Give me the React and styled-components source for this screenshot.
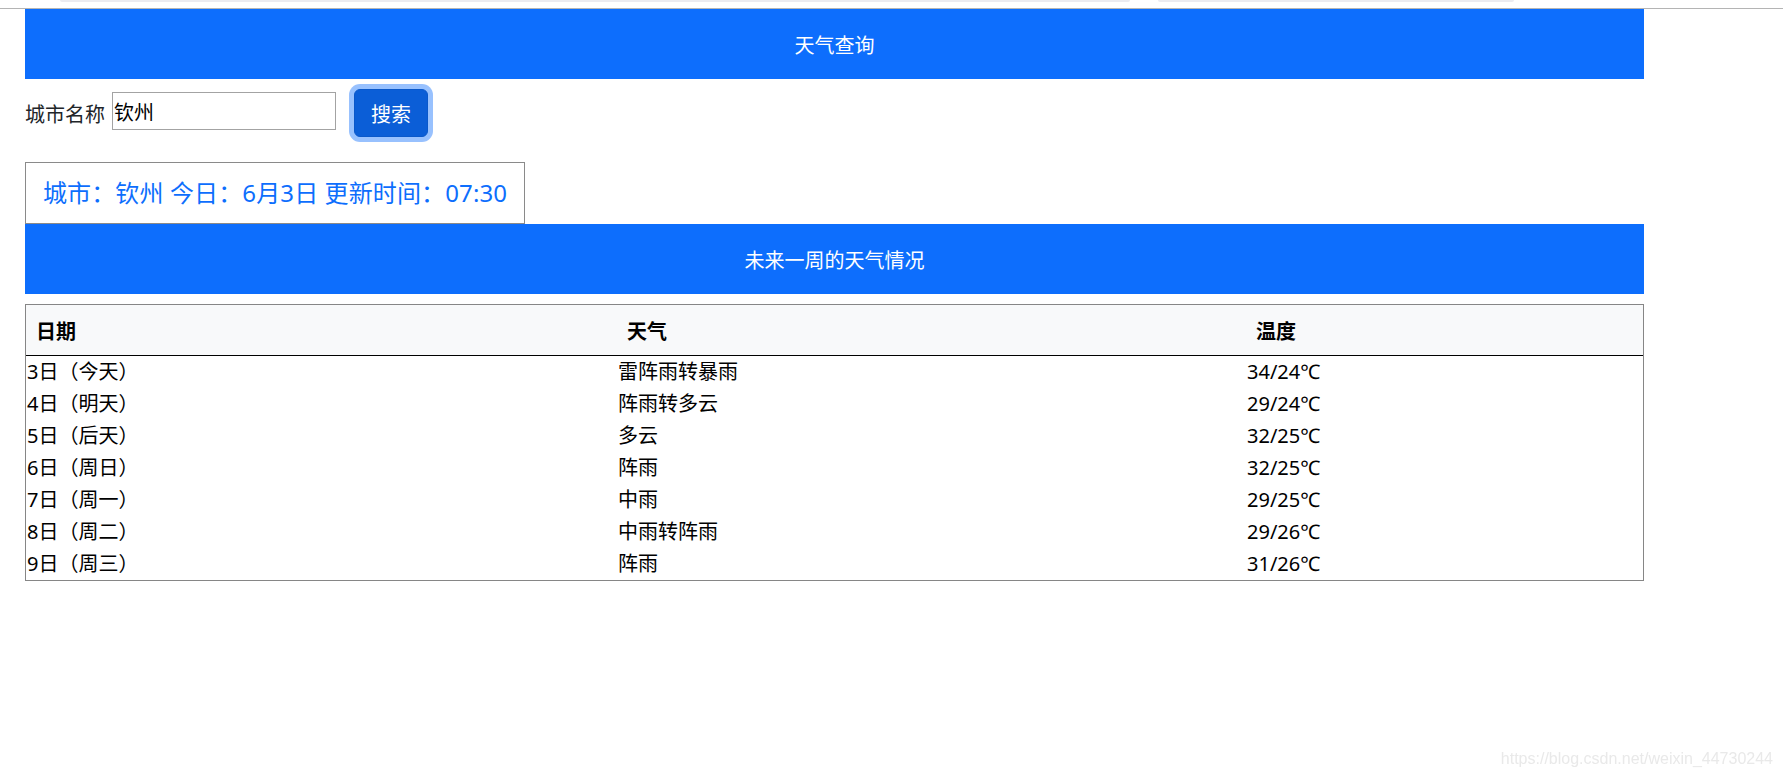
import React from 'react';
import styled, { createGlobalStyle } from 'styled-components';

const GlobalStyle = createGlobalStyle`
  html, body {
    margin: 0;
    padding: 0;
    background: #ffffff;
  }
  body {
    font-family: "Noto Sans", "Noto Sans CJK SC", sans-serif;
    color: #212529;
    min-height: 778px;
  }
`;

const TopStrip = styled.div`
  height: 8px;
  border-bottom: 1px solid #b4b4b4;
  display: flex;
  align-items: flex-start;
  gap: 28px;
  padding-left: 60px;
`;

const ChromeTab = styled.div`
  width: ${(p) => p.$w}px;
  height: 2px;
  background: #ebebf0;
  border-radius: 0 0 6px 6px;
`;

const Main = styled.main`
  margin-left: 25px;
  width: 1619px;
`;

const Banner = styled.div`
  height: 70px;
  background: #0d6efd;
  color: #ffffff;
  font-size: 20px;
  display: flex;
  align-items: center;
  justify-content: center;
`;

const SearchRow = styled.form`
  margin-top: 10px;
  height: 48px;
  display: flex;
  align-items: center;
`;

const Label = styled.label`
  font-size: 20px;
  color: #212529;
  margin-right: 7px;
`;

const CityInput = styled.input`
  box-sizing: border-box;
  width: 224px;
  height: 38px;
  margin: 0 18px 4px 0;
  padding: 0 1px;
  border: 1px solid #a3a3a3;
  font-family: "Noto Sans", "Noto Sans CJK SC", sans-serif;
  font-size: 20px;
  color: #000;
  outline: none;
`;

const SearchButton = styled.button`
  box-sizing: border-box;
  width: 74px;
  height: 48px;
  border: 1px solid #0a58ca;
  border-radius: 6px;
  background: #0b5ed7;
  color: #ffffff;
  font-family: "Noto Sans", "Noto Sans CJK SC", sans-serif;
  font-size: 20px;
  padding: 0;
  box-shadow: 0 0 0 5px rgba(49, 132, 253, 0.5);
  cursor: pointer;
`;

const InfoBox = styled.div`
  margin-top: 25px;
  width: fit-content;
  box-sizing: border-box;
  height: 62px;
  border: 1px solid #8a8a8a;
  padding: 0 17px;
  font-size: 24px;
  letter-spacing: 0.12px;
  line-height: 60px;
  color: #0d6efd;
  white-space: nowrap;
`;

const WeekTable = styled.table`
  margin-top: 10px;
  width: 100%;
  table-layout: fixed;
  border-collapse: separate;
  border-spacing: 0;
  border: 1px solid #868686;
`;

const HeadCell = styled.th`
  height: 50px;
  padding: 0 10px;
  text-align: left;
  background: #f8f9fa;
  border-bottom: 1px solid #000000;
  font-size: 20px;
  font-weight: 700;
  color: #000000;
`;

const Cell = styled.td`
  height: 32px;
  padding: 0 1px;
  font-size: 20px;
  line-height: 32px;
  color: #000000;
  white-space: nowrap;
`;

const Watermark = styled.div`
  position: fixed;
  right: 10px;
  top: 750px;
  font-family: "Liberation Sans", Arial, sans-serif;
  font-size: 16px;
  color: #e9e9e9;
  pointer-events: none;
`;

const forecast = [
  ['3日（今天）', '雷阵雨转暴雨', '34/24℃'],
  ['4日（明天）', '阵雨转多云', '29/24℃'],
  ['5日（后天）', '多云', '32/25℃'],
  ['6日（周日）', '阵雨', '32/25℃'],
  ['7日（周一）', '中雨', '29/25℃'],
  ['8日（周二）', '中雨转阵雨', '29/26℃'],
  ['9日（周三）', '阵雨', '31/26℃'],
];

export default function App() {
  return (
    <>
      <GlobalStyle />
      <TopStrip>
        <ChromeTab $w={1070} />
        <ChromeTab $w={356} />
      </TopStrip>
      <Main>
        <Banner>天气查询</Banner>
        <SearchRow onSubmit={(e) => e.preventDefault()}>
          <Label htmlFor="city">城市名称</Label>
          <CityInput id="city" defaultValue="钦州" />
          <SearchButton type="submit">搜索</SearchButton>
        </SearchRow>
        <InfoBox>城市：钦州 今日：6月3日 更新时间：07:30</InfoBox>
        <Banner>未来一周的天气情况</Banner>
        <WeekTable>
          <colgroup>
            <col style={{ width: 591 }} />
            <col style={{ width: 629 }} />
            <col />
          </colgroup>
          <thead>
            <tr>
              <HeadCell>日期</HeadCell>
              <HeadCell>天气</HeadCell>
              <HeadCell>温度</HeadCell>
            </tr>
          </thead>
          <tbody>
            {forecast.map((row) => (
              <tr key={row[0]}>
                {row.map((v, i) => (
                  <Cell key={i}>{v}</Cell>
                ))}
              </tr>
            ))}
          </tbody>
        </WeekTable>
      </Main>
      <Watermark>https://blog.csdn.net/weixin_44730244</Watermark>
    </>
  );
}
